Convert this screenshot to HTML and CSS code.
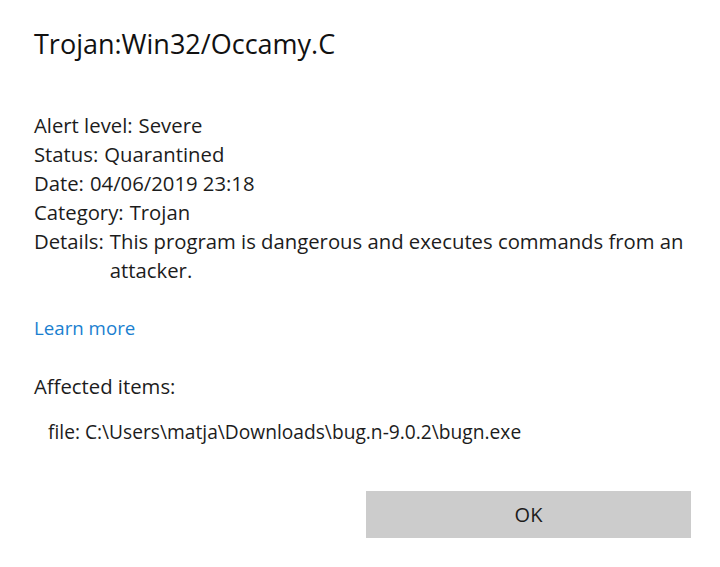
FILE: index.html
```html
<!DOCTYPE html>
<html>
<head>
<meta charset="utf-8">
<link rel="stylesheet" href="styles.css">
</head>
<body>
<div class="dialog">
  <h1 class="title">Trojan:Win32/Occamy.C</h1>
  <div class="props">
    <div class="row"><span class="label">Alert level:</span><span class="value">Severe</span></div>
    <div class="row"><span class="label">Status:</span><span class="value">Quarantined</span></div>
    <div class="row"><span class="label">Date:</span><span class="value">04/06/2019 23:18</span></div>
    <div class="row"><span class="label">Category:</span><span class="value">Trojan</span></div>
    <div class="row"><span class="label">Details:</span><span class="value">This program is dangerous and executes commands from an attacker.</span></div>
  </div>
  <a class="learn" href="#">Learn more</a>
  <div class="affected">Affected items:</div>
  <div class="file">file: C:\Users\matja\Downloads\bug.n-9.0.2\bugn.exe</div>
  <div class="actions"><button class="ok">OK</button></div>
</div>
</body>
</html>
```
FILE: styles.css
```css
html, body {
  margin: 0;
  padding: 0;
  background: #ffffff;
}
body {
  font-family: "Open Sans", "Noto Sans", sans-serif;
  color: #1c1c1c;
  width: 720px;
  height: 567px;
  overflow: hidden;
}
.dialog {
  padding: 24px 20px 0 34px;
}
.title {
  margin: 0;
  font-size: 27px;
  font-weight: 400;
  line-height: 40px;
  color: #111;
}
.props {
  margin-top: 47px;
  font-size: 20.3px;
  line-height: 29px;
}
.row {
  display: flex;
}
.label {
  flex: none;
  margin-right: 6px;
}
.value {
  flex: 1;
}
.learn {
  display: block;
  margin-top: 30px;
  font-size: 18.7px;
  line-height: 26px;
  color: #1a7fd0;
  text-decoration: none;
  width: max-content;
}
.affected {
  margin-top: 31px;
  font-size: 20.3px;
  line-height: 29px;
}
.file {
  margin-top: 18px;
  padding-left: 14px;
  font-size: 19.2px;
  line-height: 26px;
}
.actions {
  display: flex;
  justify-content: flex-end;
  margin-top: 46px;
  padding-right: 9px;
}
.ok {
  width: 325px;
  height: 47px;
  border: none;
  background: #cccccc;
  font-family: inherit;
  font-size: 20px;
  color: #1c1c1c;
  padding: 0;
}
```
